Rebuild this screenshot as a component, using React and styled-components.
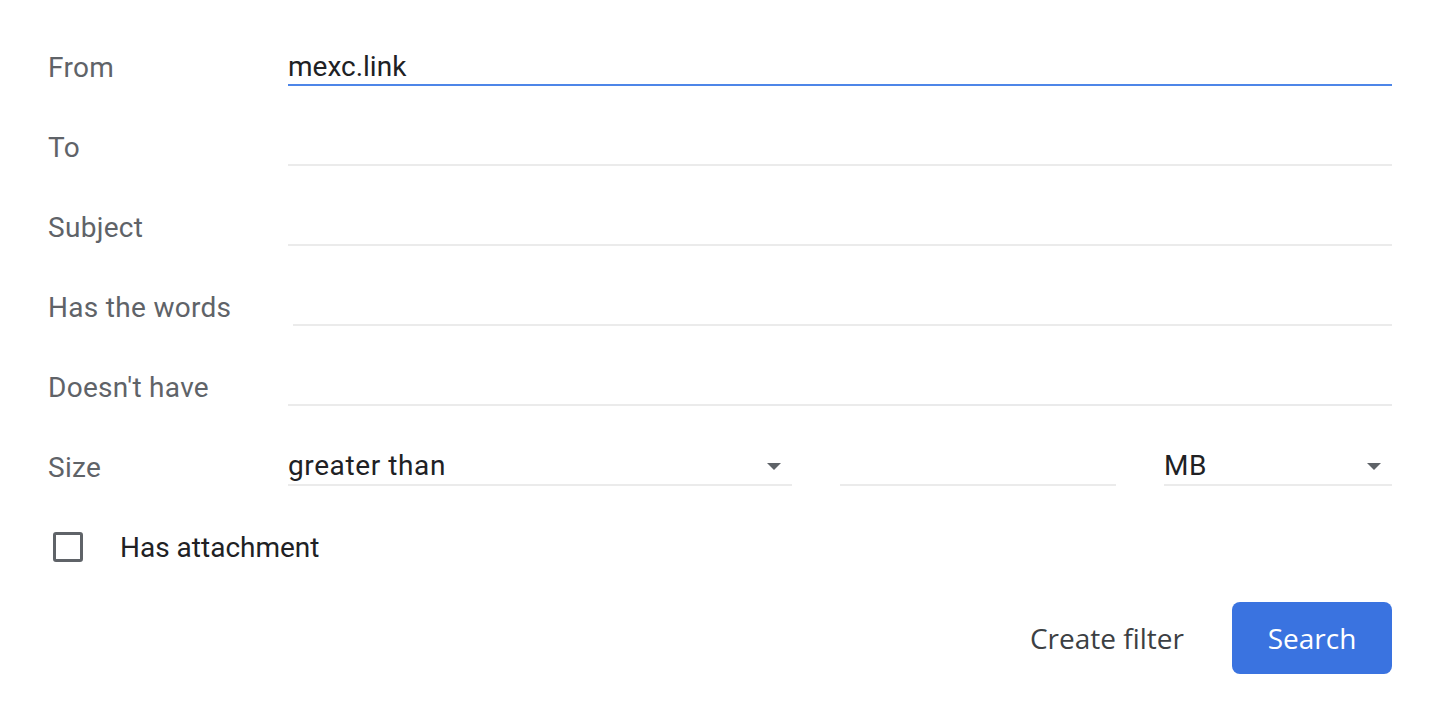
import React from "react";
import styled, { createGlobalStyle } from "styled-components";

const GlobalStyle = createGlobalStyle`
  body {
    margin: 0;
    background: #ffffff;
    font-family: Roboto, "Liberation Sans", Arial, sans-serif;
  }
`;

export default function App() {
  return (
    <>
      <GlobalStyle />
      <Panel>
        <Row>
          <Label>From</Label>
          <Field $focused>mexc.link</Field>
        </Row>
        <Row>
          <Label>To</Label>
          <Field />
        </Row>
        <Row>
          <Label>Subject</Label>
          <Field />
        </Row>
        <Row>
          <Label>Has the words</Label>
          <Field $shift={5} />
        </Row>
        <Row>
          <Label>Doesn't have</Label>
          <Field />
        </Row>
        <Row>
          <Label>Size</Label>
          <SizeGroup>
            <Select $width={504}>
              greater than
              <Arrow />
            </Select>
            <Field $width={276} />
            <Select $width={228}>
              MB
              <Arrow />
            </Select>
          </SizeGroup>
        </Row>
        <CheckRow>
          <Box />
          <CheckLabel>Has attachment</CheckLabel>
        </CheckRow>
        <Actions>
          <TextButton>Create filter</TextButton>
          <PrimaryButton>Search</PrimaryButton>
        </Actions>
      </Panel>
    </>
  );
}

const Panel = styled.div`
  padding: 27px 44px 0 48px;
`;

const Row = styled.div`
  display: flex;
  align-items: center;
  height: 80px;
`;

const Label = styled.div`
  width: 240px;
  flex-shrink: 0;
  font-size: 28px;
  letter-spacing: 0.3px;
  color: #5f6368;
`;

const Field = styled.div`
  box-sizing: border-box;
  height: 38px;
  padding-top: 2px;
  margin-left: ${(p) => p.$shift || 0}px;
  flex: ${(p) => (p.$width ? "none" : "1")};
  width: ${(p) => (p.$width ? `${p.$width}px` : "auto")};
  border-bottom: 2px solid ${(p) => (p.$focused ? "#4d86e8" : "#ebebeb")};
  font-size: 28px;
  line-height: 34px;
  color: #202124;
`;

const SizeGroup = styled.div`
  flex: 1;
  display: flex;
  gap: 48px;
`;

const Select = styled(Field)`
  display: flex;
  align-items: center;
  justify-content: space-between;
  padding-top: 0;
  padding-right: 11px;
  letter-spacing: 0.6px;
`;

const Arrow = styled.span`
  width: 0;
  height: 0;
  border-left: 7px solid transparent;
  border-right: 7px solid transparent;
  border-top: 7px solid #5f6368;
`;

const CheckRow = styled.div`
  display: flex;
  align-items: center;
  height: 80px;
  padding-left: 5px;
`;

const Box = styled.div`
  box-sizing: border-box;
  width: 30px;
  height: 30px;
  border: 3px solid #5f6368;
  border-radius: 3px;
`;

const CheckLabel = styled.span`
  margin-left: 37px;
  font-size: 28px;
  color: #202124;
`;

const Actions = styled.div`
  display: flex;
  justify-content: flex-end;
  align-items: center;
  gap: 24px;
  margin-top: 15px;
`;

const TextButton = styled.button`
  border: none;
  background: none;
  padding: 0 24px;
  height: 72px;
  font-family: "Open Sans", Roboto, sans-serif;
  font-size: 28px;
  font-weight: 500;
  color: #3c4043;
`;

const PrimaryButton = styled.button`
  width: 160px;
  height: 72px;
  border: none;
  border-radius: 8px;
  background: #3a73e0;
  color: #ffffff;
  font-family: "Open Sans", Roboto, sans-serif;
  font-size: 28px;
  font-weight: 500;
`;
